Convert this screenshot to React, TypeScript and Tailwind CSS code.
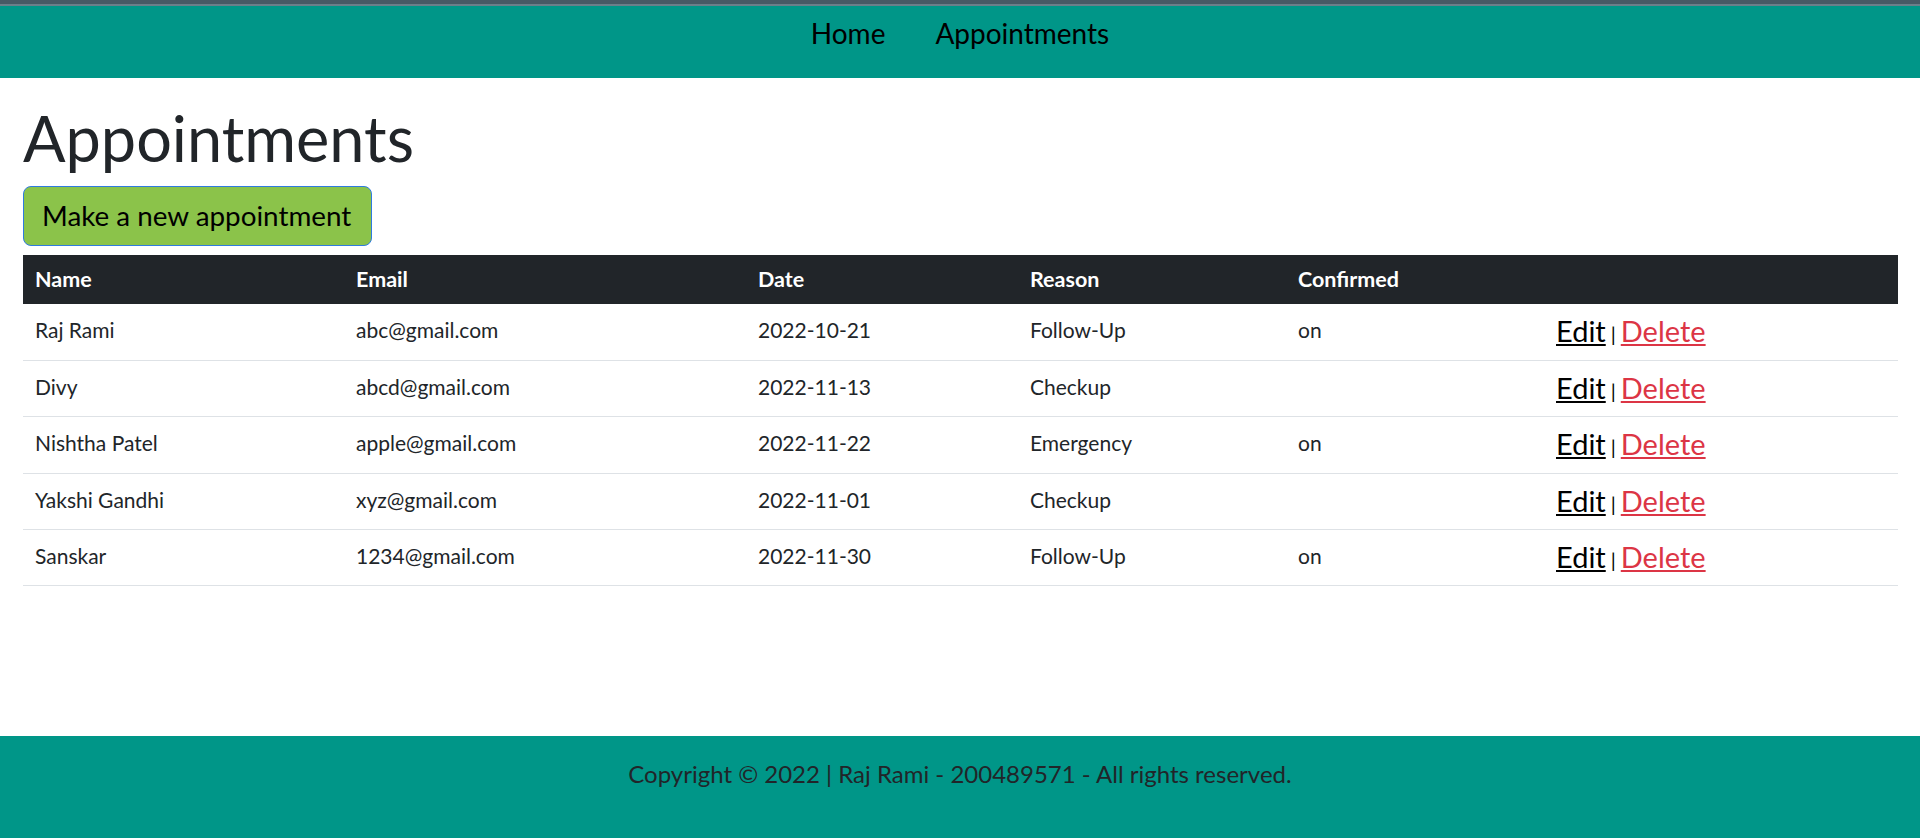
const appointments = [
  { name: 'Raj Rami', email: 'abc@gmail.com', date: '2022-10-21', reason: 'Follow-Up', confirmed: 'on' },
  { name: 'Divy', email: 'abcd@gmail.com', date: '2022-11-13', reason: 'Checkup', confirmed: '' },
  { name: 'Nishtha Patel', email: 'apple@gmail.com', date: '2022-11-22', reason: 'Emergency', confirmed: 'on' },
  { name: 'Yakshi Gandhi', email: 'xyz@gmail.com', date: '2022-11-01', reason: 'Checkup', confirmed: '' },
  { name: 'Sanskar', email: '1234@gmail.com', date: '2022-11-30', reason: 'Follow-Up', confirmed: 'on' },
];

function NavBar() {
  return (
    <header>
      <div className="h-[4px] bg-[#475a65]" />
      <div className="h-[2px] bg-[#6b7f8a]" />
      <nav className="h-[72px] bg-[#009688] flex justify-center items-start pt-[13px] gap-[50px]">
        <a href="#" className="text-[28px] leading-none text-black">Home</a>
        <a href="#" className="text-[28px] leading-none text-black">Appointments</a>
      </nav>
    </header>
  );
}

function AppointmentTable() {
  return (
    <table className="w-[1875px] border-collapse mt-[9px] text-[#212529]">
      <thead>
        <tr className="bg-[#212529] text-white">
          <th className="w-[321px] h-[49px] align-top pt-[14px] pl-[12px] text-left text-[21.5px] leading-none font-bold">Name</th>
          <th className="w-[402px] h-[49px] align-top pt-[14px] pl-[12px] text-left text-[21.5px] leading-none font-bold">Email</th>
          <th className="w-[272px] h-[49px] align-top pt-[14px] pl-[12px] text-left text-[21.5px] leading-none font-bold">Date</th>
          <th className="w-[268px] h-[49px] align-top pt-[14px] pl-[12px] text-left text-[21.5px] leading-none font-bold">Reason</th>
          <th className="w-[258px] h-[49px] align-top pt-[14px] pl-[12px] text-left text-[21.5px] leading-none font-bold">Confirmed</th>
          <th className="h-[49px] align-top pt-[14px] pl-[12px] text-left text-[21.5px] leading-none font-bold"></th>
        </tr>
      </thead>
      <tbody>
        {appointments.map((a, i) => (
          <tr key={i} className="border-b border-[#dee2e6]">
            <td className="h-[56.4px] align-top pt-[15px] pl-[12px] text-[21px] leading-none">{a.name}</td>
            <td className="h-[56.4px] align-top pt-[15px] pl-[12px] text-[21px] leading-none">{a.email}</td>
            <td className="h-[56.4px] align-top pt-[15px] pl-[12px] text-[21px] leading-none">{a.date}</td>
            <td className="h-[56.4px] align-top pt-[15px] pl-[12px] text-[21px] leading-none">{a.reason}</td>
            <td className="h-[56.4px] align-top pt-[15px] pl-[12px] text-[21px] leading-none">{a.confirmed}</td>
            <td className="h-[56.4px] align-top pt-[12px] pl-[12px] leading-none whitespace-nowrap">
              <a href="#" className="text-[29px] text-black underline">Edit</a>
              <span className="text-[20px] text-black mx-[5px]">|</span>
              <a href="#" className="text-[29px] text-[#dc3545] underline">Delete</a>
            </td>
          </tr>
        ))}
      </tbody>
    </table>
  );
}

export default function App() {
  return (
    <div className="min-h-[838px] flex flex-col bg-white font-['Lato',sans-serif]">
      <NavBar />
      <main className="flex-1 px-[23px]">
        <h1 className="mt-[28px] text-[63px] leading-none font-normal text-[#212529]">Appointments</h1>
        <button className="mt-[17px] h-[60px] w-[349px] pl-[18px] pr-[8px] flex items-center whitespace-nowrap rounded-[8px] border border-[#2f7be0] bg-[#8bc34a] text-[27.8px] leading-none text-black">
          Make a new appointment
        </button>
        <AppointmentTable />
      </main>
      <footer className="h-[102px] bg-[#009688] pt-[26px] text-center text-[24px] leading-none text-[#212529]">
        Copyright © 2022 | Raj Rami - 200489571 - All rights reserved.
      </footer>
    </div>
  );
}
